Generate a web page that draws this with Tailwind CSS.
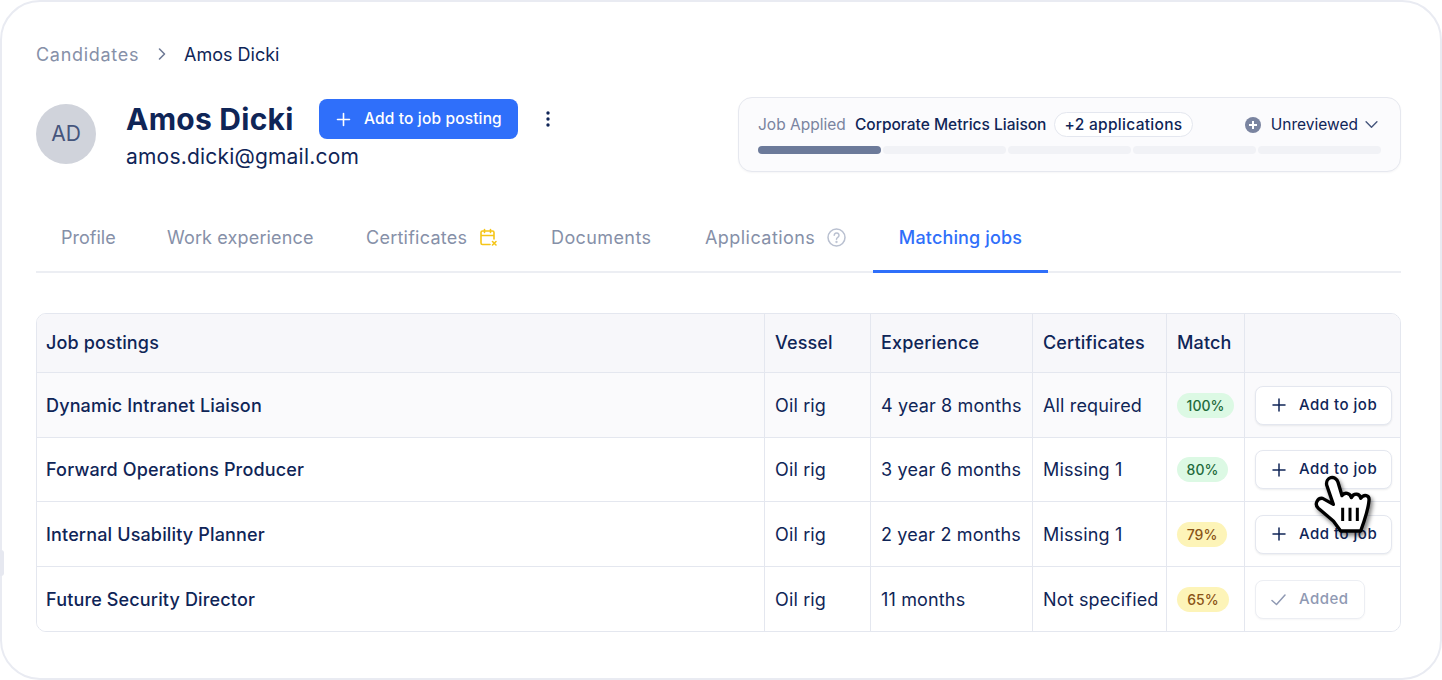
<!DOCTYPE html>
<html>
<head>
<meta charset="utf-8">
<script src="https://cdn.jsdelivr.net/npm/@tailwindcss/browser@4"></script>
</head>
<body class="w-[1442px] h-[680px] overflow-hidden bg-white font-['Inter',sans-serif] text-[#0f2557]">
<div class="relative w-[1442px] h-[680px] rounded-[40px] border-2 border-[#e9ebf2] bg-white pl-[34px] pr-[39px] pt-[41px]">
  <div class="absolute -left-[2px] top-[548px] w-[4px] h-[26px] rounded-r-[3px] bg-[#e6e8f0]"></div>
  <nav class="flex items-center h-[22px] text-[18px]">
    <span class="text-[#8690a8] w-[102px] tracking-[0.7px] whitespace-nowrap">Candidates</span>
    <svg class="w-[14px] h-[14px] ml-[17px] mr-[15px]" viewBox="0 0 14 14" fill="none" stroke="#6f7a96" stroke-width="1.6" stroke-linecap="round" stroke-linejoin="round"><path d="M4.5 2 L9.5 7 L4.5 12"/></svg>
    <span>Amos Dicki</span>
  </nav>

  <div class="flex justify-between mt-[32px] h-[75px]">
    <div class="flex">
      <div class="w-[60px] h-[60px] mt-[7px] rounded-full bg-[#d0d3db] flex items-center justify-center text-[21px] text-[#45557c]">AD</div>
      <div class="ml-[30px]">
        <div class="flex items-center h-[40px] mt-[2px]">
          <h1 class="text-[30px] font-bold tracking-[0.25px] w-[193px] whitespace-nowrap">Amos Dicki</h1>
          <button class="flex items-center w-[199px] h-[40px] rounded-[8px] bg-[#2f6ffa] text-white text-[15.5px] font-medium tracking-[0.15px] pl-[17px]">
            <svg class="w-[15px] h-[15px] mr-[13px]" viewBox="0 0 15 15" fill="none" stroke="currentColor" stroke-width="1.6" stroke-linecap="round"><path d="M7.5 1.5v12M1.5 7.5h12"/></svg>
            Add to job posting
          </button>
          <svg class="w-[6px] h-[18px] ml-[27px]" viewBox="0 0 6 18" fill="#0f2557"><circle cx="3" cy="3" r="1.7"/><circle cx="3" cy="9" r="1.7"/><circle cx="3" cy="15" r="1.7"/></svg>
        </div>
        <div class="text-[21px] mt-[4px] leading-[28px] tracking-[0.2px]">amos.dicki@gmail.com</div>
      </div>
    </div>

    <div class="w-[663px] h-[75px] rounded-[14px] border border-[#e6e8ef] bg-[#fbfbfd] px-[19px] pt-[13px] shadow-[0_1px_2px_rgba(16,24,40,0.04)]">
      <div class="flex items-center h-[27px] text-[15.5px] whitespace-nowrap">
        <span class="text-[#7a84a0] w-[97px]">Job Applied</span>
        <span class="font-medium w-[199px]">Corporate Metrics Liaison</span>
        <span class="h-[25px] w-[139px] rounded-full border border-[#e4e7ef] bg-white flex items-center justify-center font-medium tracking-[0.3px]">+2 applications</span>
        <svg class="w-[16px] h-[16px] ml-auto mr-[10px]" viewBox="0 0 16 16"><circle cx="8" cy="8" r="8" fill="#7a84a0"/><path d="M8 4v8M4 8h8" stroke="#fff" stroke-width="2"/></svg>
        <span>Unreviewed</span>
        <svg class="w-[13px] h-[13px] ml-[7px] mr-[3px]" viewBox="0 0 12 12" fill="none" stroke="#45557c" stroke-width="1.3" stroke-linecap="round" stroke-linejoin="round"><path d="M1 3.5 L6 8.5 L11 3.5"/></svg>
      </div>
      <div class="flex gap-[2px] mt-[8px]">
        <div class="h-[8px] flex-1 rounded-full bg-[#6c7a9a]"></div>
        <div class="h-[8px] flex-1 rounded-full bg-[#f1f2f6]"></div>
        <div class="h-[8px] flex-1 rounded-full bg-[#f1f2f6]"></div>
        <div class="h-[8px] flex-1 rounded-full bg-[#f1f2f6]"></div>
        <div class="h-[8px] flex-1 rounded-full bg-[#f1f2f6]"></div>
      </div>
    </div>
  </div>

  <div class="flex h-[66px] mt-[35px] border-b-2 border-[#eceef3] text-[18px] text-[#8690a8] tracking-[0.15px] whitespace-nowrap">
    <div class="w-[106px] pl-[25px] h-[64px] pb-[4px] flex items-center tracking-normal">Profile</div>
    <div class="w-[199px] pl-[25px] h-[64px] pb-[4px] flex items-center">Work experience</div>
    <div class="w-[185px] pl-[25px] h-[64px] pb-[4px] flex items-center gap-[12px]"><span class="tracking-[0.25px]">Certificates</span>
      <svg class="w-[19px] h-[19px]" viewBox="0 0 19 19" fill="none" stroke="#f5c518" stroke-width="1.6" stroke-linecap="round" stroke-linejoin="round"><path d="M11 16.5H3.5a1.5 1.5 0 0 1-1.5-1.5V4.5A1.5 1.5 0 0 1 3.5 3h10A1.5 1.5 0 0 1 15 4.5V11M2 7.5h13M5.5 1.5v3M11.5 1.5v3M13.5 13.5l3.5 3.5M17 13.5l-3.5 3.5"/></svg>
    </div>
    <div class="w-[154px] pl-[25px] h-[64px] pb-[4px] flex items-center tracking-[0.4px]">Documents</div>
    <div class="w-[193px] pl-[25px] h-[64px] pb-[4px] flex items-center gap-[12px]"><span class="tracking-[0.45px]">Applications</span>
      <svg class="w-[19px] h-[19px]" viewBox="0 0 19 19" fill="none" stroke="#b9c0d0" stroke-width="1.5" stroke-linecap="round"><circle cx="9.5" cy="9.5" r="8.5"/><path d="M7.2 7.3a2.4 2.4 0 1 1 3.6 2.1c-.8.5-1.3 1-1.3 1.9"/><circle cx="9.5" cy="14" r=".4"/></svg>
    </div>
    <div class="relative h-[64px] pb-[4px] w-[175px] flex items-center justify-center font-medium text-[#2f6ffa]">Matching jobs
      <div class="absolute left-0 right-0 -bottom-[2px] h-[3px] bg-[#2f6ffa]"></div>
    </div>
  </div>

  <div class="mt-[40px] w-[1365px] h-[319px] rounded-[10px] border border-[#e4e7ef] overflow-hidden text-[18px] tracking-[0.15px] whitespace-nowrap">
    <div class="grid grid-cols-[728px_106px_162px_134px_78px_1fr] h-[59px] pb-[2px] bg-[#f7f7fa] font-medium border-b border-[#e4e7ef]">
      <div class="flex items-center pl-[9px] border-r -mb-[2px] pb-[2px] border-[#e4e7ef]">Job postings</div>
      <div class="flex items-center pl-[10px] border-r -mb-[2px] pb-[2px] border-[#e4e7ef]">Vessel</div>
      <div class="flex items-center pl-[10px] border-r -mb-[2px] pb-[2px] border-[#e4e7ef]">Experience</div>
      <div class="flex items-center pl-[10px] border-r -mb-[2px] pb-[2px] border-[#e4e7ef]">Certificates</div>
      <div class="flex items-center pl-[10px] border-r -mb-[2px] pb-[2px] border-[#e4e7ef]">Match</div>
      <div></div>
    </div>
    <div class="grid grid-cols-[728px_106px_162px_134px_78px_1fr] h-[65px] bg-[#fafafc] border-b border-[#e4e7ef]">
      <div class="flex items-center pl-[9px] border-r border-[#e4e7ef] font-medium">Dynamic Intranet Liaison</div>
      <div class="flex items-center pl-[10px] border-r border-[#e4e7ef]">Oil rig</div>
      <div class="flex items-center pl-[10px] border-r border-[#e4e7ef]">4 year 8 months</div>
      <div class="flex items-center pl-[10px] border-r border-[#e4e7ef]">All required</div>
      <div class="flex items-center pl-[10px] border-r border-[#e4e7ef]"><span class="h-[25px] w-[57px] rounded-full bg-[#dcf9e4] text-[#1f6b3c] text-[14px] tracking-normal font-medium flex items-center justify-center">100%</span></div>
      <div class="flex items-center pl-[10px]"><button class="flex items-center w-[137px] h-[39px] rounded-[8px] border border-[#e4e7ef] bg-white shadow-[0_1px_2px_rgba(16,24,40,0.08)] text-[15px] tracking-[0.5px] font-medium pl-[16px]"><svg class="w-[14px] h-[14px] mr-[13px]" viewBox="0 0 14 14" fill="none" stroke="currentColor" stroke-width="1.5" stroke-linecap="round"><path d="M7 1v12M1 7h12"/></svg>Add to job</button></div>
    </div>
    <div class="grid grid-cols-[728px_106px_162px_134px_78px_1fr] h-[64px] bg-white border-b border-[#e4e7ef]">
      <div class="flex items-center pl-[9px] border-r border-[#e4e7ef] font-medium">Forward Operations Producer</div>
      <div class="flex items-center pl-[10px] border-r border-[#e4e7ef]">Oil rig</div>
      <div class="flex items-center pl-[10px] border-r border-[#e4e7ef]">3 year 6 months</div>
      <div class="flex items-center pl-[10px] border-r border-[#e4e7ef]">Missing 1</div>
      <div class="flex items-center pl-[10px] border-r border-[#e4e7ef]"><span class="h-[25px] w-[51px] rounded-full bg-[#dcf9e4] text-[#1f6b3c] text-[14px] tracking-normal font-medium flex items-center justify-center">80%</span></div>
      <div class="flex items-center pl-[10px]"><button class="flex items-center w-[137px] h-[39px] rounded-[8px] border border-[#e4e7ef] bg-white shadow-[0_1px_2px_rgba(16,24,40,0.08)] text-[15px] tracking-[0.5px] font-medium pl-[16px]"><svg class="w-[14px] h-[14px] mr-[13px]" viewBox="0 0 14 14" fill="none" stroke="currentColor" stroke-width="1.5" stroke-linecap="round"><path d="M7 1v12M1 7h12"/></svg>Add to job</button></div>
    </div>
    <div class="grid grid-cols-[728px_106px_162px_134px_78px_1fr] h-[65px] bg-white border-b border-[#e4e7ef]">
      <div class="flex items-center pl-[9px] border-r border-[#e4e7ef] font-medium">Internal Usability Planner</div>
      <div class="flex items-center pl-[10px] border-r border-[#e4e7ef]">Oil rig</div>
      <div class="flex items-center pl-[10px] border-r border-[#e4e7ef]">2 year 2 months</div>
      <div class="flex items-center pl-[10px] border-r border-[#e4e7ef]">Missing 1</div>
      <div class="flex items-center pl-[10px] border-r border-[#e4e7ef]"><span class="h-[25px] w-[50px] rounded-full bg-[#fdf4b8] text-[#8a5316] text-[14px] tracking-normal font-medium flex items-center justify-center">79%</span></div>
      <div class="flex items-center pl-[10px]"><button class="flex items-center w-[137px] h-[39px] rounded-[8px] border border-[#e4e7ef] bg-white shadow-[0_1px_2px_rgba(16,24,40,0.08)] text-[15px] tracking-[0.5px] font-medium pl-[16px]"><svg class="w-[14px] h-[14px] mr-[13px]" viewBox="0 0 14 14" fill="none" stroke="currentColor" stroke-width="1.5" stroke-linecap="round"><path d="M7 1v12M1 7h12"/></svg>Add to job</button></div>
    </div>
    <div class="grid grid-cols-[728px_106px_162px_134px_78px_1fr] h-[64px] bg-white">
      <div class="flex items-center pl-[9px] border-r border-[#e4e7ef] font-medium">Future Security Director</div>
      <div class="flex items-center pl-[10px] border-r border-[#e4e7ef]">Oil rig</div>
      <div class="flex items-center pl-[10px] border-r border-[#e4e7ef]">11 months</div>
      <div class="flex items-center pl-[10px] border-r border-[#e4e7ef]">Not specified</div>
      <div class="flex items-center pl-[10px] border-r border-[#e4e7ef]"><span class="h-[25px] w-[52px] rounded-full bg-[#fdf4b8] text-[#8a5316] text-[14px] tracking-normal font-medium flex items-center justify-center">65%</span></div>
      <div class="flex items-center pl-[10px]"><button class="flex items-center w-[110px] h-[39px] rounded-[8px] border border-[#eceef3] bg-white shadow-[0_1px_2px_rgba(16,24,40,0.04)] text-[15px] tracking-[0.5px] font-medium text-[#8f99b3] pl-[15px]"><svg class="w-[15px] h-[15px] mr-[13px]" viewBox="0 0 15 15" fill="none" stroke="#8f99b3" stroke-width="1.5" stroke-linecap="round" stroke-linejoin="round"><path d="M1 8.5 L5.5 12.5 L14 3"/></svg>Added</button></div>
    </div>
  </div>

  <svg class="absolute left-[1298px] top-[463px] w-[80px] h-[75px] drop-shadow-[2px_3px_2px_rgba(0,0,0,0.5)]" viewBox="0 0 240 225" fill="#fff" stroke="#000" stroke-width="10" stroke-linecap="round" stroke-linejoin="round">
    <path d="M100 118 L80 60 C76 36 106 28 114 52 L126 92 C134 80 150 84 154 98 C162 82 180 86 182 100 C192 86 209 90 207 106 C205 132 194 165 182 198 L122 198 L100 168 L55 130 C42 118 52 98 68 100 Z"/>
    <path d="M128 128v40M150 128v40M172 128v40" fill="none" stroke-width="9" stroke-linecap="butt"/>
  </svg>
</div>
</body>
</html>
